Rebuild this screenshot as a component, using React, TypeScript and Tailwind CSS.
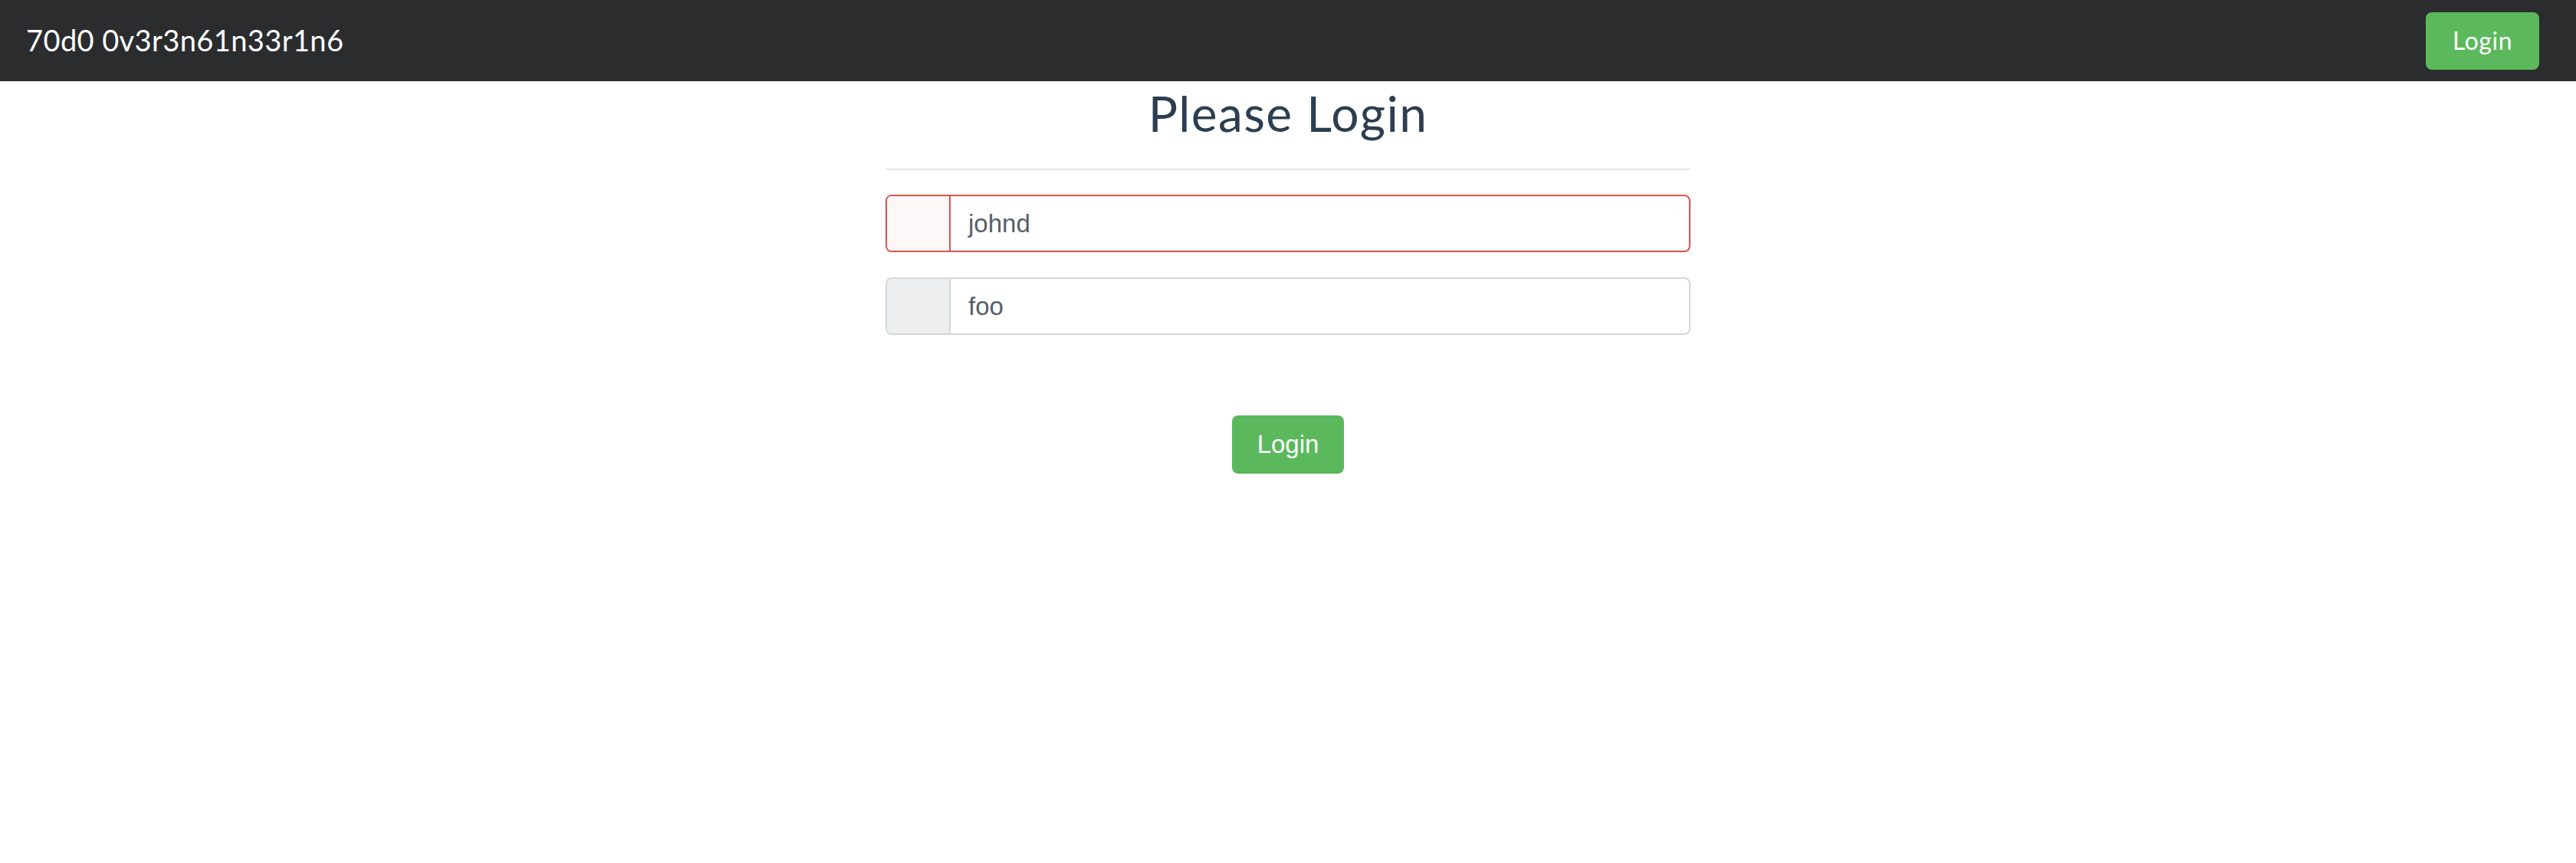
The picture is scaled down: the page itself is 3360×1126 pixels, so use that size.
import React from "react";

export default function App() {
  return (
    <div className="min-h-screen bg-white">
      <nav className="flex h-[106px] items-center justify-between bg-[#2b2c2e] pl-[34px] pr-[48px]">
        <span className="font-['Lato',sans-serif] text-[38px] leading-none tracking-[0.4px] text-white pb-[2px]">
          70d0 0v3r3n61n33r1n6
        </span>
        <button className="flex h-[75px] w-[148px] items-center justify-center rounded-[8px] bg-[#5cb85c] font-['Lato',sans-serif] text-[32px] tracking-[0.5px] text-white">
          Login
        </button>
      </nav>
      <main className="mx-auto w-[1050px] pt-[4px]">
        <h1 className="text-center font-['Lato',sans-serif] text-[64px] leading-[1.2] tracking-[1.4px] text-[#2c3e50]">
          Please Login
        </h1>
        <div className="mt-[33px] h-[2px] bg-[#e5e5e5]" />
        <div className="mt-[32px] flex h-[75px] rounded-[8px] border-[2px] border-[#d9534f]">
          <div className="w-[83px] rounded-l-[6px] border-r-[2px] border-[#d9534f] bg-[#fdf7f7]" />
          <div className="flex flex-1 items-center pl-[23px] font-['Liberation_Sans',Arial,sans-serif] text-[33px] text-[#55606b]">
            johnd
          </div>
        </div>
        <div className="mt-[33px] flex h-[75px] rounded-[8px] border-[2px] border-[#d6d6d6]">
          <div className="w-[83px] rounded-l-[6px] border-r-[2px] border-[#d6d6d6] bg-[#eceeef]" />
          <div className="flex flex-1 items-center pl-[23px] font-['Liberation_Sans',Arial,sans-serif] text-[33px] text-[#55606b]">
            foo
          </div>
        </div>
        <div className="mt-[105px] flex justify-center">
          <button className="flex h-[76px] w-[146px] items-center justify-center rounded-[8px] bg-[#5cb85c] font-['Liberation_Sans',Arial,sans-serif] text-[33px] text-white">
            Login
          </button>
        </div>
      </main>
    </div>
  );
}
